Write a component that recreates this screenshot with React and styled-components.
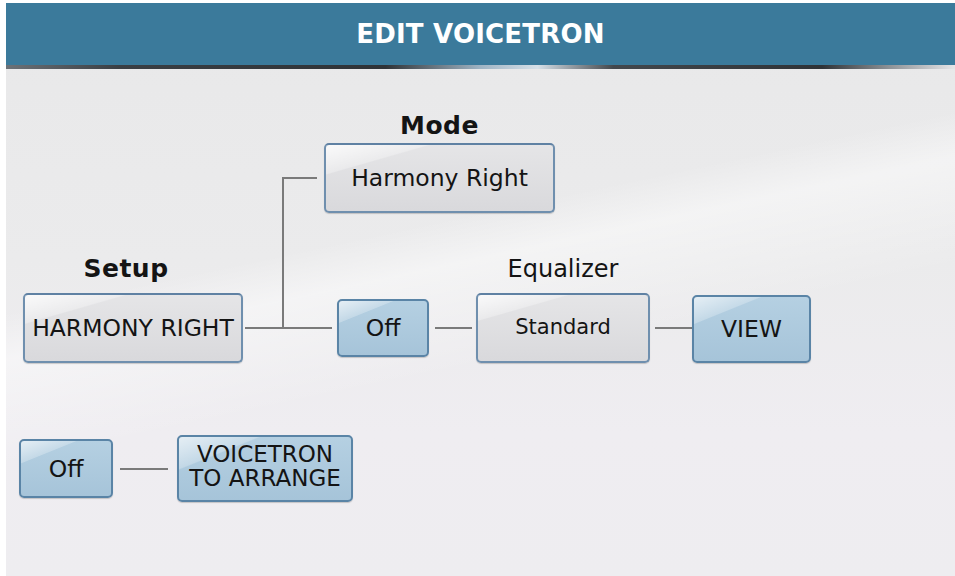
import React from "react";
import styled, { createGlobalStyle, css } from "styled-components";

const GlobalStyle = createGlobalStyle`
  html, body {
    margin: 0;
    padding: 0;
    background: #ffffff;
    overflow: hidden;
  }
  body {
    font-family: "DejaVu Sans", "Liberation Sans", sans-serif;
    color: #141414;
  }
`;

const Screen = styled.div`
  width: 949px;
  height: 573px;
  margin: 3px 0 0 6px;
  display: flex;
  flex-direction: column;
  background:
    linear-gradient(168deg, rgba(255, 255, 255, 0) 0%, rgba(255, 255, 255, 0) 40%, rgba(255, 255, 255, 0.45) 46%, rgba(255, 255, 255, 0) 60%),
    linear-gradient(180deg, #e8e8e9 0%, #ebebec 45%, #efedf1 75%, #eeedf0 100%);
  overflow: hidden;
`;

const Header = styled.header`
  height: 62px;
  flex-shrink: 0;
  background: #3b7a9b;
  display: flex;
  align-items: center;
  justify-content: center;
`;

const Title = styled.h1`
  margin: 0;
  font-size: 26px;
  font-weight: bold;
  color: #ffffff;
  letter-spacing: 0.2px;
`;

const HeaderShadow = styled.div`
  height: 4px;
  flex-shrink: 0;
  background: linear-gradient(
    90deg,
    #6c7278 0%,
    #3a3f44 12%,
    #2f3337 40%,
    #9fb4c4 50%,
    #d6e0e8 56%,
    #43484d 64%,
    #2f3337 86%,
    #8c9196 93%,
    #e6e6e8 100%
  );
`;

const Main = styled.main`
  flex: 1;
  padding: 43px 0 0 13px;
`;

const TopGrid = styled.div`
  display: grid;
  grid-template-columns: 220px 39px 42px auto;
  grid-template-rows: 31px 70px 42px 38px 70px;
  margin-left: 4px;
`;

const Heading = styled.div`
  font-size: 25px;
  font-weight: bold;
  line-height: 28px;
  letter-spacing: 0.5px;
  text-align: center;
`;

const ModeTitle = styled(Heading)`
  grid-column: 4;
  grid-row: 1;
  width: 231px;
  align-self: start;
`;

const SetupTitle = styled(Heading)`
  grid-column: 1;
  grid-row: 4;
  align-self: start;
  padding-right: 14px;
`;

const Field = styled.div`
  box-sizing: border-box;
  width: ${(p) => p.$w}px;
  height: ${(p) => p.$h}px;
  flex-shrink: 0;
  display: flex;
  align-items: center;
  justify-content: center;
  text-align: center;
  font-size: ${(p) => p.$fs || 23.5}px;
  line-height: ${(p) => (p.$lh ? `${p.$lh}px` : "normal")};
  padding-bottom: ${(p) => p.$nudge || 0}px;
  border-radius: 5px;
  border: 2px solid;
  box-shadow: 0 1px 1px rgba(0, 0, 0, 0.18);
  ${(p) =>
    p.$tone === "blue"
      ? css`
          border-color: #5a84a6;
          background:
            linear-gradient(158deg, rgba(255, 255, 255, 0.65) 0%, rgba(255, 255, 255, 0.25) 24%, rgba(255, 255, 255, 0) 25%),
            linear-gradient(180deg, #b5d0e2 0%, #a6c4d9 100%);
        `
      : css`
          border-color: #6f8fae;
          border-top-color: #5f81a3;
          background:
            linear-gradient(164deg, rgba(255, 255, 255, 0.8) 0%, rgba(255, 255, 255, 0.3) 22%, rgba(255, 255, 255, 0) 23%),
            linear-gradient(180deg, #e5e5e7 0%, #d9d9dc 100%);
        `}
`;

const ModeSlot = styled.div`
  grid-column: 4;
  grid-row: 2;
`;

const SetupSlot = styled.div`
  grid-column: 1;
  grid-row: 5;
`;

const Wire = styled.div`
  height: 2px;
  background: #7a7a7a;
  flex-shrink: 0;
`;

const SetupStub = styled(Wire)`
  grid-column: 2;
  grid-row: 5;
  align-self: center;
  margin-left: 2px;
`;

const TopArm = styled(Wire)`
  grid-column: 3;
  grid-row: 2;
  align-self: center;
  width: 35px;
`;

const Trunk = styled.div`
  grid-column: 3;
  grid-row: 2 / 6;
  margin: 34px 0 34px 0;
  border-left: 2px solid #7a7a7a;
  border-bottom: 2px solid #7a7a7a;
`;

const Chain = styled.div`
  grid-column: 4;
  grid-row: 4 / 6;
  display: flex;
  align-items: flex-end;
`;

const ChainWire = styled(Wire)`
  width: ${(p) => p.$w}px;
  margin: 0 ${(p) => p.$mr || 0}px 34px ${(p) => p.$ml || 0}px;
`;

const Node = styled.div`
  display: flex;
  flex-direction: column;
  align-items: center;
  margin-bottom: ${(p) => p.$drop || 0}px;
`;

const Caption = styled.div`
  font-size: 24px;
  line-height: 28px;
  margin-bottom: 10px;
`;

const BottomRow = styled.div`
  display: flex;
  align-items: center;
  margin-top: 72px;
`;

const BottomWire = styled(Wire)`
  width: 48px;
  margin: 0 9px 0 7px;
`;

export default function App() {
  return (
    <>
      <GlobalStyle />
      <Screen>
        <Header>
          <Title>EDIT VOICETRON</Title>
        </Header>
        <HeaderShadow />
        <Main>
          <TopGrid>
            <ModeTitle>Mode</ModeTitle>
            <TopArm />
            <ModeSlot>
              <Field $tone="gray" $w={231} $h={70}>
                Harmony Right
              </Field>
            </ModeSlot>
            <Trunk />
            <SetupTitle>Setup</SetupTitle>
            <SetupSlot>
              <Field $tone="gray" $w={220} $h={70}>
                HARMONY RIGHT
              </Field>
            </SetupSlot>
            <SetupStub />
            <Chain>
              <ChainWire $w={8} $mr={5} />
              <Node $drop={6}>
                <Field $tone="blue" $w={92} $h={58}>
                  Off
                </Field>
              </Node>
              <ChainWire $w={37} $ml={6} $mr={4} />
              <Node>
                <Caption>Equalizer</Caption>
                <Field $tone="gray" $w={174} $h={70} $fs={21} $nudge={3}>
                  Standard
                </Field>
              </Node>
              <ChainWire $w={37} $ml={5} />
              <Node>
                <Field $tone="blue" $w={119} $h={68}>
                  VIEW
                </Field>
              </Node>
            </Chain>
          </TopGrid>
          <BottomRow>
            <Field $tone="blue" $w={94} $h={59}>
              Off
            </Field>
            <BottomWire />
            <Field $tone="blue" $w={176} $h={67} $fs={23} $lh={24} $nudge={5}>
              VOICETRON
              <br />
              TO ARRANGE
            </Field>
          </BottomRow>
        </Main>
      </Screen>
    </>
  );
}
